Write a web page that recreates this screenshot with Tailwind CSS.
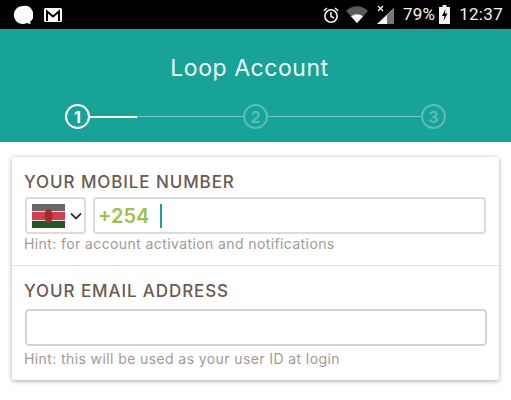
<!doctype html>
<html><head><meta charset="utf-8"><script src="https://cdn.jsdelivr.net/npm/@tailwindcss/browser@4"></script></head>
<body class="w-[511px] h-[400px] overflow-hidden bg-white font-['Inter','Liberation_Sans',sans-serif]">
<div class="h-[29px] bg-black flex items-center text-[#f2f2f2] font-['Roboto',sans-serif] pl-[13px] pr-[8px]">
  <svg class="w-[20px] h-[20px] mr-[10px]" viewBox="0 0 20 20"><path d="M10 1a9 9 0 1 0 4 17l3.500 1.300-.3-2.500A9 9 0 0 0 10 1z" fill="#fff"/></svg>
  <svg class="w-[20px] h-[16px]" viewBox="0 0 20 16"><rect x="1" y="1" width="18" height="14" rx="1.500" fill="#fff"/><path d="M4 14V4.500l6 5 6-5V14" fill="none" stroke="#000" stroke-width="2"/></svg>
  <div class="flex-1"></div>
  <svg class="w-[18px] h-[18px] mr-[6px]" viewBox="0 0 18 18" fill="none" stroke="#f2f2f2"><circle cx="9" cy="10" r="6.200" stroke-width="1.600"/><path d="M9 6v4.500l3 1.500M1.800 4.800 5 2M16.200 4.800 13 2" stroke-width="1.500"/></svg>
  <svg class="w-[22px] h-[17px] mr-[9px]" viewBox="0 0 22 17"><path d="M0 5a15 15 0 0 1 22 0L11 17z" fill="#5a5a5a"/><path d="M5 10.500a9 9 0 0 1 12 0L11 17z" fill="#fff"/></svg>
  <svg class="w-[17px] h-[19px] mr-[9px]" viewBox="0 0 17 19"><path d="M17 3v16H0z" fill="#fff"/><path d="M10 10v9h7V3z" fill="#777"/><path d="M1 1l5 5M6 1 1 6" stroke="#fff" stroke-width="1.200"/></svg>
  <span class="text-[17px] leading-none tracking-[0.2px] mr-[4px]">79%</span>
  <svg class="w-[11px] h-[19px] mr-[9px]" viewBox="0 0 11 19"><path d="M3.500 0h4v2H11v17H0V2h3.500z" fill="#f2f2f2"/><path d="M6.500 4 3 11h2.500L4.500 16 8.500 8.500H6z" fill="#000"/></svg>
  <span class="text-[17px] leading-none tracking-[0.3px]">12:37</span>
</div>
<div class="h-[113px] bg-[#17a398] flex flex-col items-center">
  <div class="mt-[25px] mr-[12px] text-[23px] leading-[28px] text-[#f4fbfa] tracking-[0.550px]">Loop Account</div>
  <div class="mt-[22px] flex items-center w-[381px]">
    <div class="w-[25px] h-[25px] rounded-full border-2 border-white text-white flex items-center justify-center text-[16px] font-bold shrink-0">1</div>
    <div class="w-[47px] h-[2px] bg-white"></div>
    <div class="w-[106px] h-[1px] bg-white/40"></div>
    <div class="w-[25px] h-[25px] rounded-full border-2 border-white/30 text-white/30 flex items-center justify-center text-[16px] font-bold shrink-0">2</div>
    <div class="flex-1 h-[1px] bg-white/40"></div>
    <div class="w-[25px] h-[25px] rounded-full border-2 border-white/30 text-white/30 flex items-center justify-center text-[16px] font-bold shrink-0">3</div>
  </div>
</div>
<div class="mx-[12px] mt-[15px] h-[223px] rounded-[2px] bg-white shadow-[0_1px_5px_rgba(0,0,0,0.35)]">
  <div class="h-[109px] px-[12px] pt-[15px] border-b border-[#dddddd]">
    <div class="text-[17px] leading-[20px] font-medium text-[#6a5a50] tracking-[0.900px]">YOUR MOBILE NUMBER</div>
    <div class="mt-[5px] ml-[1px] flex gap-[7px]">
      <div class="w-[61px] h-[37px] rounded-[4px] border-2 border-[#dcdcdc] flex items-center pl-[5px] gap-[5px]">
        <svg class="w-[33px] h-[24px]" viewBox="0 0 33 24"><rect width="33" height="8" fill="#6a6662"/><rect y="8" width="33" height="8" fill="#cf4050"/><rect y="16" width="33" height="8" fill="#1f5a22"/><rect y="7" width="33" height="1" fill="#ddd"/><rect y="16" width="33" height="1" fill="#ddd"/><ellipse cx="16.500" cy="12" rx="4" ry="7" fill="#a52a30"/></svg>
        <svg class="w-[12px] h-[8px]" viewBox="0 0 12 8" fill="none" stroke="#333" stroke-width="1.800"><path d="M1 1.500 6 6.500 11 1.500"/></svg>
      </div>
      <div class="w-[393px] h-[37px] rounded-[4px] border-2 border-[#dcdcdc] flex items-center pl-[3px]">
        <span class="text-[20px] font-semibold text-[#9bc34b]">+254</span>
        <span class="ml-[11px] w-[2px] h-[24px] bg-[#17a398]"></span>
      </div>
    </div>
    <div class="mt-[1px] text-[14px] leading-[18px] text-[#a39a93] tracking-[0.400px]">Hint: for account activation and notifications</div>
  </div>
  <div class="px-[12px] pt-[15px]">
    <div class="text-[17px] leading-[20px] font-medium text-[#6a5a50] tracking-[0.900px]">YOUR EMAIL ADDRESS</div>
    <div class="mt-[8px] ml-[1px] h-[37px] rounded-[4px] border-2 border-[#d4d4d4]"></div>
    <div class="mt-[4px] text-[14px] leading-[18px] text-[#a39a93] tracking-[0.400px]">Hint: this will be used as your user ID at login</div>
  </div>
</div>
</body></html>
